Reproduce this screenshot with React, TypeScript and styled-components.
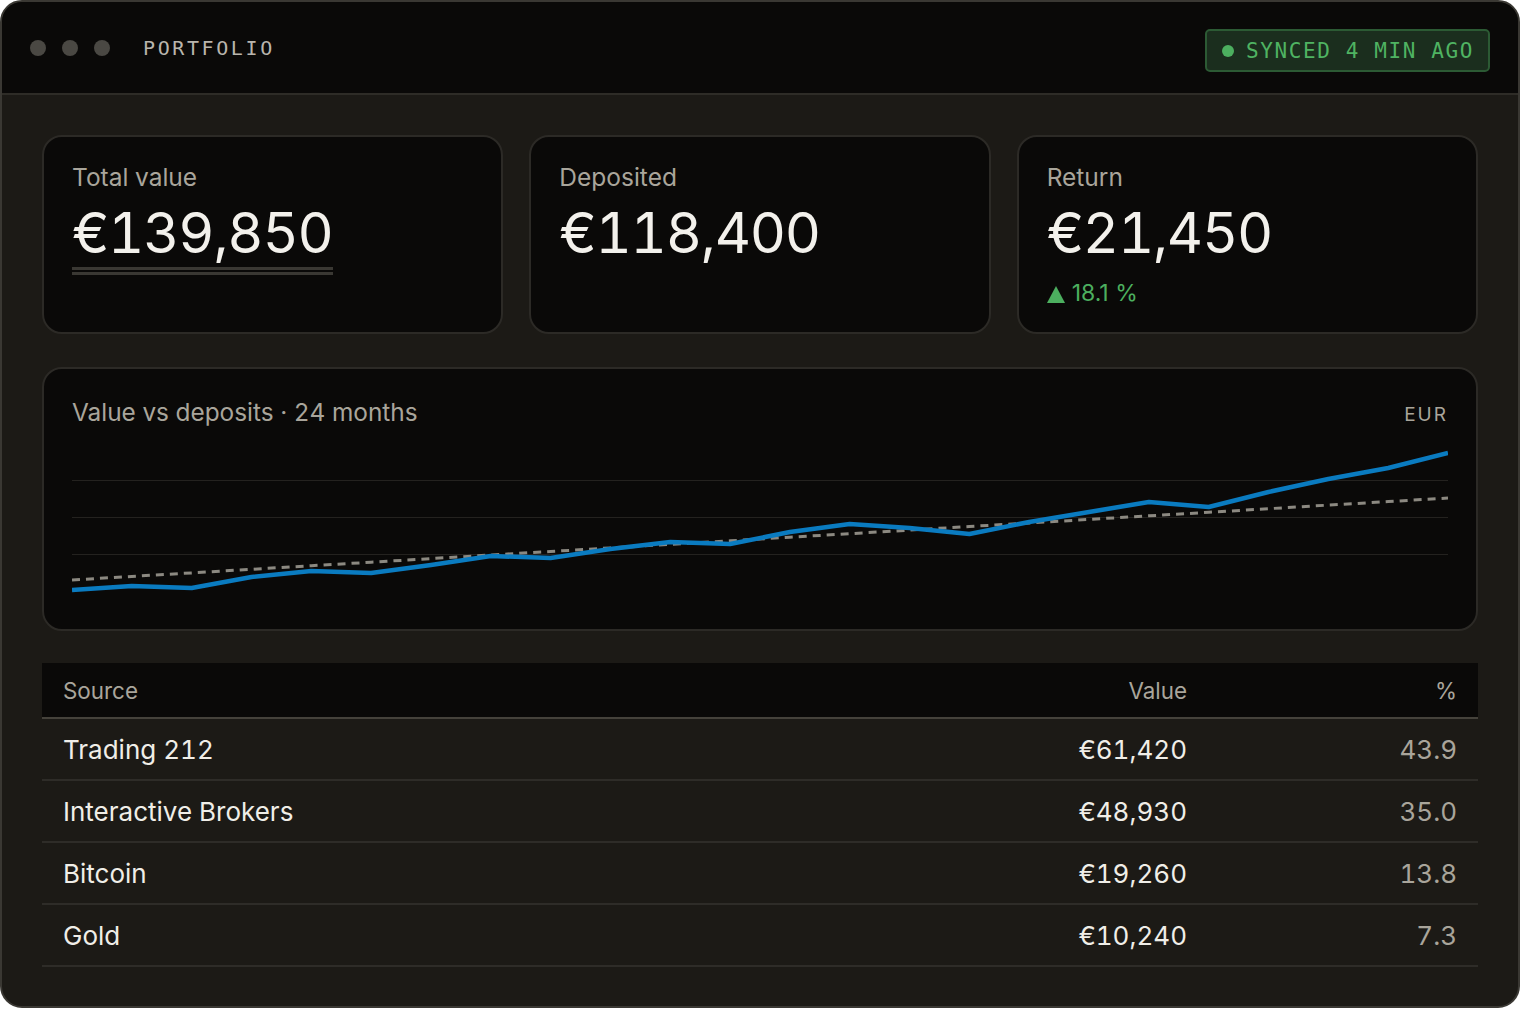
import React from "react";
import styled, { createGlobalStyle } from "styled-components";

const Global = createGlobalStyle`
  * { box-sizing: border-box; }
  html, body { margin: 0; padding: 0; background: #ffffff; }
  body { font-family: "Inter", "Noto Sans", sans-serif; font-variant-numeric: tabular-nums; }
`;

const Window = styled.div`
  width: 1520px;
  height: 1008px;
  border: 2px solid #3a3833;
  border-radius: 22px;
  overflow: hidden;
  background: #1c1a16;
  display: flex;
  flex-direction: column;
`;

const TitleBar = styled.header`
  height: 93px;
  flex: none;
  background: #0a0908;
  border-bottom: 2px solid #2e2c27;
  display: flex;
  align-items: center;
  padding: 0 28px;
`;

const Dots = styled.div`
  display: flex;
  gap: 16px;
  margin-right: 33px;
`;

const Dot = styled.span`
  width: 16px;
  height: 16px;
  border-radius: 50%;
  background: #4a4843;
`;

const AppTitle = styled.div`
  font-family: "DejaVu Sans Mono", "Liberation Mono", monospace;
  font-size: 20px;
  letter-spacing: 2.6px;
  color: #b9b5ad;
  flex: 1;
`;

const SyncBadge = styled.div`
  margin-top: 6px;
  height: 43px;
  display: flex;
  align-items: center;
  gap: 12px;
  padding: 0 14px 0 15px;
  background: #1b2e1e;
  border: 2px solid #2c5a34;
  border-radius: 5px;
  font-family: "DejaVu Sans Mono", "Liberation Mono", monospace;
  font-size: 21px;
  letter-spacing: 1.6px;
  color: #4fb362;
`;

const SyncDot = styled.span`
  width: 12px;
  height: 12px;
  border-radius: 50%;
  background: #4caf5f;
`;

const Content = styled.main`
  padding: 40px;
  display: flex;
  flex-direction: column;
`;

const StatGrid = styled.section`
  display: grid;
  grid-template-columns: repeat(3, 1fr);
  gap: 26px;
`;

const Card = styled.div`
  background: #0a0908;
  border: 2px solid #2c2a26;
  border-radius: 20px;
`;

const StatCard = styled(Card)`
  height: 199px;
  padding: 26px 28px 24px;
  display: flex;
  flex-direction: column;
  align-items: flex-start;
`;

const Label = styled.div`
  font-size: 24.5px;
  color: #a9a59b;
  line-height: 29px;
`;

const Value = styled.div<{ $underline?: boolean }>`
  margin-top: 13px;
  font-size: 56px;
  line-height: 56px;
  color: #f3f1ec;
  letter-spacing: -1.2px;
  ${(p) =>
    p.$underline
      ? `padding-bottom: 6px; border-bottom: 8px double #3a3833;`
      : ``}
`;

const Delta = styled.div`
  margin-top: 19px;
  display: flex;
  align-items: center;
  gap: 7px;
  font-size: 23px;
  line-height: 27px;
  color: #4caf5f;
  letter-spacing: 0px;
  font-variant-numeric: normal;
`;

const Triangle = styled.span`
  width: 0;
  height: 0;
  border-left: 9px solid transparent;
  border-right: 9px solid transparent;
  border-bottom: 17px solid #4caf5f;
  margin-top: 2px;
`;

const ChartCard = styled(Card)`
  margin-top: 33px;
  padding: 29px 28px 30px;
`;

const ChartHead = styled.div`
  display: flex;
  justify-content: space-between;
  align-items: baseline;
`;

const ChartTitle = styled.div`
  font-size: 24.4px;
  line-height: 29px;
  color: #a9a59b;
`;

const Currency = styled.div`
  font-size: 19px;
  letter-spacing: 2px;
  color: #a9a59b;
`;

const ChartSvg = styled.svg`
  display: block;
  margin-top: 12px;
  width: 100%;
  height: 160px;
`;

const Table = styled.section`
  margin-top: 32px;
`;

const Row = styled.div<{ $head?: boolean }>`
  display: grid;
  grid-template-columns: 1fr 200px 270px;
  align-items: center;
  padding: 0 21px;
  height: ${(p) => (p.$head ? "56px" : "62px")};
  background: ${(p) => (p.$head ? "#0a0908" : "transparent")};
  border-bottom: 2px solid ${(p) => (p.$head ? "#45423b" : "#2e2c28")};
`;

const Cell = styled.div<{ $head?: boolean; $align?: "left" | "right"; $muted?: boolean }>`
  text-align: ${(p) => p.$align ?? "left"};
  font-size: ${(p) => (p.$head ? "22.4px" : "26px")};
  color: ${(p) => (p.$head || p.$muted ? "#a9a59b" : "#f0eee8")};
`;

const valuePts = [
  151, 147, 149, 138, 132, 134, 126, 117, 119, 110, 103, 105, 93, 85, 89, 95, 83,
  73, 63, 68, 53, 40, 29, 14,
];

const W = 1376;
const step = W / (valuePts.length - 1);
const valuePath = valuePts
  .map((y, i) => `${i === 0 ? "M" : "L"}${(i * step).toFixed(1)},${y}`)
  .join(" ");
const depositPath = valuePts
  .map((_, i) => {
    const y = 141 - (82 * i) / (valuePts.length - 1);
    return `${i === 0 ? "M" : "L"}${(i * step).toFixed(1)},${y.toFixed(1)}`;
  })
  .join(" ");

const rows = [
  { name: "Trading 212", value: "€61,420", pct: "43.9" },
  { name: "Interactive Brokers", value: "€48,930", pct: "35.0" },
  { name: "Bitcoin", value: "€19,260", pct: "13.8" },
  { name: "Gold", value: "€10,240", pct: "7.3" },
];

export default function App() {
  return (
    <>
      <Global />
      <Window>
        <TitleBar>
          <Dots>
            <Dot />
            <Dot />
            <Dot />
          </Dots>
          <AppTitle>PORTFOLIO</AppTitle>
          <SyncBadge>
            <SyncDot />
            SYNCED 4 MIN AGO
          </SyncBadge>
        </TitleBar>
        <Content>
          <StatGrid>
            <StatCard>
              <Label>Total value</Label>
              <Value $underline>€139,850</Value>
            </StatCard>
            <StatCard>
              <Label>Deposited</Label>
              <Value>€118,400</Value>
            </StatCard>
            <StatCard>
              <Label>Return</Label>
              <Value>€21,450</Value>
              <Delta>
                <Triangle />
                18.1 %
              </Delta>
            </StatCard>
          </StatGrid>

          <ChartCard>
            <ChartHead>
              <ChartTitle>Value vs deposits · 24 months</ChartTitle>
              <Currency>EUR</Currency>
            </ChartHead>
            <ChartSvg viewBox={`0 0 ${W} 160`} preserveAspectRatio="none">
              {[41, 78, 115].map((y) => (
                <line key={y} x1={0} x2={W} y1={y + 0.5} y2={y + 0.5} stroke="#24221f" strokeWidth={1} />
              ))}
              <path d={depositPath} fill="none" stroke="#8c8981" strokeWidth={3} strokeDasharray="8 6" />
              <path d={valuePath} fill="none" stroke="#0a7bc0" strokeWidth={4.5} strokeLinejoin="round" />
            </ChartSvg>
          </ChartCard>

          <Table>
            <Row $head>
              <Cell $head>Source</Cell>
              <Cell $head $align="right">Value</Cell>
              <Cell $head $align="right">%</Cell>
            </Row>
            {rows.map((r) => (
              <Row key={r.name}>
                <Cell>{r.name}</Cell>
                <Cell $align="right">{r.value}</Cell>
                <Cell $align="right" $muted>{r.pct}</Cell>
              </Row>
            ))}
          </Table>
        </Content>
      </Window>
    </>
  );
}
